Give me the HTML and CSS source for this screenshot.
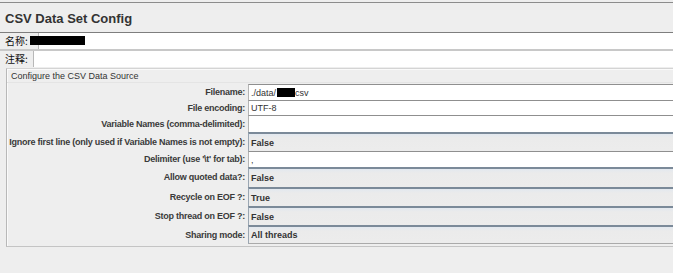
FILE: index.html
```html
<!DOCTYPE html>
<html lang="zh-CN">
<head>
    <meta charset="UTF-8">
    <title>CSV Data Set Config</title>
    <link rel="stylesheet" href="styles.css">
</head>
<body>

<div class="panel">
    <h2 class="title">CSV Data Set Config</h2>

    <div class="name-row">
        <label class="cn-label name-label">名称:</label>
        <div class="field">
            <span class="redact name-redact"></span>
        </div>
    </div>
    <div class="name-row comment-row">
        <label class="cn-label comment-label">注释:</label>
        <div class="field"></div>
    </div>

    <div class="group">
        <div class="legend">Configure the CSV Data Source</div>
        <div class="form">
            <label class="h16">Filename:</label>
            <div class="field h16">./data/<span class="redact file-redact"></span>csv</div>

            <label class="h15">File encoding:</label>
            <div class="field h15">UTF-8</div>

            <label class="h17">Variable Names (comma-delimited):</label>
            <div class="field h17"></div>

            <label class="h19">Ignore first line (only used if Variable Names is not empty):</label>
            <div class="combo h19">False</div>

            <label class="h16">Delimiter (use '\t' for tab):</label>
            <div class="field h16">,</div>

            <label class="h20">Allow quoted data?:</label>
            <div class="combo h20">False</div>

            <label class="h19">Recycle on EOF ?:</label>
            <div class="combo h19">True</div>

            <label class="h19">Stop thread on EOF ?:</label>
            <div class="combo h19">False</div>

            <label class="h19">Sharing mode:</label>
            <div class="combo last h19">All threads</div>
        </div>
    </div>
</div>

</body>
</html>
```

FILE: styles.css
```css
html, body {
    margin: 0;
    padding: 0;
    background-color: #eeeeee;
    overflow: hidden;
}
body {
    padding-top: 2px;
    font-family: "Liberation Sans", Arial, sans-serif;
    color: #222;
}
.panel {
    border-top: 1px solid #8c8c8c;
    width: 673px;
}
.title {
    margin: 0;
    height: 29px;
    line-height: 31px;
    padding-left: 5px;
    font-size: 13px;
    font-weight: bold;
    color: #333;
}
.name-row {
    display: flex;
    height: 16px;
    border-top: 1px solid #7e7e7e;
}
.comment-row {
    border-top: 2px solid #c8c8c8;
    height: 16px;
}
.cn-label {
    font-family: "Noto Sans CJK SC", sans-serif;
    font-size: 10px;
    line-height: 16px;
    padding-left: 5px;
    color: #111;
    background-color: #eeeeee;
}
.name-label {
    width: 33px;
}
.comment-label {
    width: 28px;
}
.name-row .field {
    flex: 1;
    position: relative;
    background-color: #fff;
    border-left: 1px solid #b8b8b8;
}
.redact {
    display: inline-block;
    background-color: #000;
}
.name-redact {
    position: absolute;
    left: -9px;
    top: 3px;
    width: 55px;
    height: 9px;
}
.group {
    margin-top: 1px;
    margin-left: 6px;
    border-top: 1px solid #d4d4d4;
    border-left: 1px solid #b8b8b8;
    border-bottom: 1px solid #c4c4c4;
    box-shadow: inset 1px 1px 0 #fafafa;
    padding-top: 1px;
    padding-bottom: 2px;
    width: 680px;
}
.legend {
    font-size: 9px;
    line-height: 12px;
    padding-left: 4px;
    color: #333;
    border-bottom: 1px solid #e4e4e4;
}
.form {
    display: grid;
    grid-template-columns: 241px 1fr;
    margin-top: 1px;
}
.form label {
    font-size: 9px;
    font-weight: bold;
    letter-spacing: -0.25px;
    color: #3a3a3a;
    padding-right: 3px;
    white-space: nowrap;
    display: flex;
    align-items: center;
    justify-content: flex-end;
}
.form .field,
.form .combo {
    font-size: 9px;
    display: flex;
    align-items: center;
    padding-left: 2px;
    box-sizing: border-box;
}
.form .field {
    background-color: #fff;
    border-top: 1px solid #8f8f8f;
    border-left: 1px solid #b4b4b4;
    color: #333;
}
.file-redact {
    width: 18px;
    height: 9px;
    margin-left: 1px;
}
.combo {
    background: linear-gradient(#e2e8ef, #ebebeb 4px, #ececec);
    border-top: 2px solid #7b8a99;
    border-left: 1px solid #9aa6b2;
    font-weight: bold;
    color: #333;
}
.combo.last {
    border-bottom: 1px solid #aaaaaa;
}
.h15 { height: 15px; }
.h16 { height: 16px; }
.h17 { height: 17px; }
.h19 { height: 19px; }
.h20 { height: 20px; }
```
